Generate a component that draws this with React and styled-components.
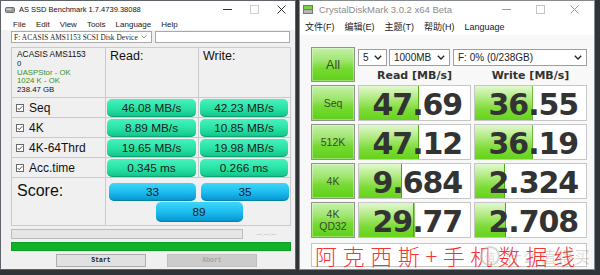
import React from 'react';
import styled, { createGlobalStyle } from 'styled-components';

const Global = createGlobalStyle`
  * { box-sizing: border-box; }
  html, body { margin: 0; padding: 0; }
  body { background: #2f3439; font-family: "Liberation Sans", Arial, sans-serif; }
`;

const Page = styled.div`
  position: relative;
  width: 600px;
  height: 275px;
  display: flex;
  align-items: flex-start;
  gap: 3px;
  background: #2f3439;
  overflow: hidden;
`;

/* ---------- shared window chrome ---------- */
const Window = styled.div`
  flex: none;
  width: 296px;
  height: 270px;
  display: flex;
  flex-direction: column;
  background: ${p => p.$bg};
  border: 1px solid ${p => p.$border};
`;

const TitleBar = styled.div`
  flex: none;
  height: 17px;
  display: flex;
  align-items: center;
  background: #fff;
  padding-left: ${p => p.$pad}px;
`;

const TitleText = styled.span`
  margin-left: ${p => p.$gap}px;
  font-family: ${p => p.$font};
  font-size: ${p => p.$size}px;
  color: ${p => p.$color};
  white-space: nowrap;
`;

const Controls = styled.div`
  margin-left: auto;
  display: flex;
  align-items: center;
  padding-right: ${p => p.$pr}px;
`;

const Ctl = styled.span`
  width: ${p => p.$w}px;
  height: 17px;
  display: flex;
  align-items: center;
  justify-content: center;
`;

const MenuBar = styled.div`
  flex: none;
  height: ${p => p.$h}px;
  display: flex;
  align-items: center;
  gap: ${p => p.$gap}px;
  padding-left: ${p => p.$pad}px;
  background: #fff;
  font-family: ${p => p.$font};
  font-size: ${p => p.$size}px;
  color: #1a1a1a;
  white-space: nowrap;
`;

const MinIcon = ({ c }) => (
  <svg width="9" height="9" viewBox="0 0 9 9"><path d="M0 4.5h9" stroke={c} strokeWidth="1" /></svg>
);
const MaxIcon = ({ c }) => (
  <svg width="9" height="9" viewBox="0 0 9 9"><rect x=".5" y=".5" width="8" height="8" fill="none" stroke={c} /></svg>
);
const CloseIcon = ({ c }) => (
  <svg width="9" height="9" viewBox="0 0 9 9"><path d="M.5 .5l8 8M8.5 .5l-8 8" stroke={c} strokeWidth="1" /></svg>
);

/* ---------- AS SSD ---------- */
const AsBody = styled.div`
  flex: 1;
  display: flex;
  flex-direction: column;
  padding: 1px 5px 0 10px;
`;

const DriveRow = styled.div`
  display: flex;
  gap: 3px;
  height: 12px;
`;

const DriveSelect = styled.div`
  width: 141px;
  display: flex;
  align-items: center;
  padding: 0 4px 0 2px;
  background: #fff;
  border: 1px solid #a9a9a9;
  font-family: "Liberation Serif", "Times New Roman", serif;
  font-size: 7.3px;
  letter-spacing: 0.1px;
  color: #222;
  white-space: nowrap;
  overflow: hidden;
`;

const Chevron = styled.span`
  margin-left: auto;
  display: flex;
  align-items: center;
`;

const DriveField = styled.div`
  flex: 1;
  background: #fff;
  border: 1px solid #a9a9a9;
`;

const Table = styled.div`
  margin-top: 4px;
  width: 280px;
  height: 179px;
  display: grid;
  grid-template-columns: 93px 92px 1fr;
  grid-template-rows: 49px 19px 19px 19px 19px 1fr;
  gap: 1px;
  padding: 1px;
  background: #cacaca;
`;

const Cell = styled.div`
  background: #f0f0f0;
  min-width: 0;
`;

const InfoCell = styled(Cell)`
  padding: 2px 0 0 5px;
  display: flex;
  flex-direction: column;
  font-size: 7.8px;
  line-height: 8.6px;
  color: #111;
`;

const InfoLine = styled.span`
  color: ${p => (p.$ok ? '#3a8f2e' : '#111')};
  font-size: ${p => (p.$big ? 8.4 : 7.8)}px;
  margin-bottom: ${p => (p.$big ? 1.5 : 0)}px;
  white-space: nowrap;
`;

const HeadCell = styled(Cell)`
  padding: 1px 0 0 4px;
  font-size: 12.5px;
  color: #111;
`;

const LabelCell = styled(Cell)`
  display: flex;
  align-items: center;
  padding-left: 2px;
  gap: 5px;
  font-size: 12px;
  color: #111;
`;

const ValueCell = styled(Cell)`
  padding: 1px 2px 0 1px;
`;

const ValueBox = styled.div`
  height: 100%;
  border-radius: 5px;
  display: flex;
  align-items: center;
  justify-content: center;
  font-size: 11.8px;
  color: #1b1b1b;
  background: ${p =>
    p.$blue
      ? 'linear-gradient(180deg, #3fd6fb 0%, #1dbdf0 50%, #0b9fd8 85%, #0a8cc4 100%)'
      : 'linear-gradient(180deg, #45f2bd 0%, #2ae4a6 50%, #19cd93 85%, #13b884 100%)'};
  box-shadow: inset 0 -1px 0 rgba(0, 90, 70, 0.25);
`;

const ScoreLabel = styled(Cell)`
  padding: 4px 0 0 5px;
  font-size: 16px;
  color: #111;
`;

const ScoreArea = styled(Cell)`
  grid-column: 2 / 4;
  display: grid;
  grid-template-columns: 87px 88px;
  grid-template-rows: 18px 20px;
  column-gap: 5px;
  row-gap: 1px;
  padding: 5px 0 0 3px;
  align-content: start;
`;

const TotalBox = styled(ValueBox)`
  grid-column: 1 / 3;
  justify-self: center;
  width: 87px;
`;

const ProgressRow = styled.div`
  margin-top: 3px;
  height: 10px;
  display: flex;
  align-items: center;
`;

const Progress = styled.div`
  width: 232px;
  height: 10px;
  background: #e6e6e6;
  border: 1px solid #bcbcbc;
`;

const Timer = styled.span`
  flex: 1;
  text-align: center;
  font-size: 6px;
  letter-spacing: 0.5px;
  color: #8a8a8a;
`;

const GreenBar = styled.div`
  margin-top: 3px;
  width: 280px;
  height: 9px;
  background: #10b228;
  border: 1px solid #0c9f21;
`;

const ButtonRow = styled.div`
  margin-top: 3px;
  display: flex;
  gap: 21px;
  padding-left: 45px;
`;

const Btn = styled.div`
  width: 90px;
  height: 13px;
  display: flex;
  align-items: center;
  justify-content: center;
  font-family: "Liberation Mono", monospace;
  font-size: 6.5px;
  font-weight: bold;
  color: ${p => (p.$disabled ? '#a5a5a5' : '#222')};
  background: ${p => (p.$disabled ? '#cccccc' : '#e1e1e1')};
  border: 1px solid ${p => (p.$disabled ? '#bfbfbf' : '#adadad')};
`;

const CheckBox = () => (
  <svg width="8" height="8" viewBox="0 0 8 8" style={{ marginLeft: 2, flex: 'none' }}>
    <rect x=".5" y=".5" width="7" height="7" fill="#fff" stroke="#6b6b6b" />
    <path d="M1.7 4.1 L3.2 5.6 L6.3 2.3" fill="none" stroke="#333" strokeWidth="0.9" />
  </svg>
);

const Chev = ({ w = 7, c = '#555', sw = 1 }) => (
  <svg width={w} height={w * 0.6} viewBox="0 0 10 6">
    <path d="M1 1l4 4 4-4" fill="none" stroke={c} strokeWidth={sw * 1.5} />
  </svg>
);

/* ---------- CrystalDiskMark ---------- */
const CdmBody = styled.div`
  flex: 1;
  display: flex;
  flex-direction: column;
  padding: 12px 7px 0 11px;
  background: #f8f8f8;
`;

const CdmGrid = styled.div`
  display: grid;
  grid-template-columns: 44px 113px 113px;
  grid-template-rows: 35px repeat(4, 36px);
  column-gap: 3px;
  row-gap: 3px;
`;

const GreenButton = styled.div`
  display: flex;
  flex-direction: column;
  align-items: center;
  justify-content: center;
  border: 1px solid #8e948a;
  background: linear-gradient(180deg, #c4f1a8 0%, #9fe56f 38%, #76da32 62%, #5fd01a 100%);
  box-shadow: inset 0 0 0 1px rgba(255, 255, 255, 0.35);
  color: #3a4a30;
  font-size: ${p => p.$size}px;
  line-height: ${p => p.$lh}px;
`;

const TopRight = styled.div`
  grid-column: 2 / 4;
  display: flex;
  flex-direction: column;
`;

const SelectRow = styled.div`
  margin-top: 2px;
  height: 17px;
  display: flex;
  gap: 2px;
`;

const SelectBox = styled.div`
  width: ${p => (p.$w ? `${p.$w}px` : 'auto')};
  flex: ${p => (p.$w ? 'none' : 1)};
  margin-left: ${p => p.$ml || 0}px;
  display: flex;
  align-items: center;
  padding: 0 4px 0 4px;
  background: #fff;
  border: 1px solid #9e9e9e;
  font-size: 10px;
  color: #222;
  white-space: nowrap;
`;

const HeaderRow = styled.div`
  display: grid;
  grid-template-columns: 113px 113px;
  column-gap: 3px;
  margin-top: 3px;
`;

const ColHead = styled.div`
  text-align: center;
  font-family: "DejaVu Sans", Verdana, sans-serif;
  font-weight: bold;
  font-size: 11px;
  color: #333;
`;

const ResultCell = styled.div`
  border: 1px solid #c6c6c6;
  background-color: #fff;
  background-image: linear-gradient(to left, #4da70f 0, #4da70f 1px, transparent 1px),
    linear-gradient(180deg, #e2f8cf 0%, #ade97c 38%, #7bdb35 70%, #66d31c 100%);
  background-repeat: no-repeat;
  text-align: right;
  padding: 3px 8px 0 0;
  font-family: "DejaVu Sans", Verdana, sans-serif;
  font-weight: bold;
  font-size: 30px;
  line-height: 31px;
  letter-spacing: -1.1px;
  color: #333;
  white-space: nowrap;
`;

const CommentBox = styled.div`
  margin-top: 5px;
  height: 24px;
  background: #fff;
  border: 1px solid #c6c6c6;
  padding-left: 3px;
  font-family: "Noto Sans CJK SC", sans-serif;
  font-weight: 300;
  font-size: 22px;
  line-height: 22px;
  letter-spacing: 5.6px;
  color: #f53434;
  white-space: nowrap;
`;

const Watermark = styled.div`
  position: absolute;
  left: 480px;
  top: 244px;
  display: flex;
  align-items: center;
  gap: 6px;
  color: rgba(130, 130, 130, 0.3);
  font-family: "Noto Sans CJK SC", sans-serif;
  pointer-events: none;
`;

const WmCircle = styled.span`
  width: 20px;
  height: 20px;
  border-radius: 50%;
  border: 2px solid rgba(150, 150, 150, 0.4);
  display: flex;
  align-items: center;
  justify-content: center;
  font-size: 10px;
  background: rgba(255, 255, 255, 0.3);
`;

const WmText = styled.span`
  font-size: 16px;
  letter-spacing: 1px;
`;

const asRows = [
  { label: 'Seq', read: '46.08 MB/s', write: '42.23 MB/s' },
  { label: '4K', read: '8.89 MB/s', write: '10.85 MB/s' },
  { label: '4K-64Thrd', read: '19.65 MB/s', write: '19.98 MB/s' },
  { label: 'Acc.time', read: '0.345 ms', write: '0.266 ms' },
];

const cdmRows = [
  { label: ['Seq'], read: '47.69', rp: 54, write: '36.55', wp: 52 },
  { label: ['512K'], read: '47.12', rp: 54, write: '36.19', wp: 52 },
  { label: ['4K'], read: '9.684', rp: 39, write: '2.324', wp: 27 },
  { label: ['4K', 'QD32'], read: '29.77', rp: 50, write: '2.708', wp: 28 },
];

const fill = pct => ({ backgroundSize: `${pct}% 100%, ${pct}% 100%` });

function AsSsd() {
  return (
    <Window $bg="#f0f0f0" $border="#5d6368">
      <TitleBar $pad={4}>
        <svg width="10" height="8" viewBox="0 0 10 8">
          <rect x="0.5" y="1.5" width="9" height="5" rx="1" fill="#9a9a9a" stroke="#6e6e6e" />
          <rect x="1.5" y="2.5" width="5" height="1.5" fill="#d6d6d6" />
        </svg>
        <TitleText $gap={4} $size={7.5} $color="#111" $font={'"Liberation Sans", sans-serif'}>
          AS SSD Benchmark 1.7.4739.38088
        </TitleText>
        <Controls $pr={0}>
          <Ctl $w={27}><MinIcon c="#333" /></Ctl>
          <Ctl $w={27}><MaxIcon c="#cfcfcf" /></Ctl>
          <Ctl $w={27}><CloseIcon c="#333" /></Ctl>
        </Controls>
      </TitleBar>
      <MenuBar $h={12} $gap={10} $pad={12} $size={8} $font={'"Liberation Sans", sans-serif'}>
        <span>File</span>
        <span>Edit</span>
        <span>View</span>
        <span>Tools</span>
        <span>Language</span>
        <span>Help</span>
      </MenuBar>
      <AsBody>
        <DriveRow>
          <DriveSelect>
            F: ACASIS AMS1153 SCSI Disk Device
            <Chevron><Chev w={6} c="#666" sw={0.8} /></Chevron>
          </DriveSelect>
          <DriveField />
        </DriveRow>
        <Table>
          <InfoCell>
            <InfoLine $big>ACASIS AMS1153</InfoLine>
            <InfoLine>0</InfoLine>
            <InfoLine $ok>UASPStor - OK</InfoLine>
            <InfoLine $ok>1024 K - OK</InfoLine>
            <InfoLine>238.47 GB</InfoLine>
          </InfoCell>
          <HeadCell>Read:</HeadCell>
          <HeadCell>Write:</HeadCell>
          {asRows.map(r => (
            <React.Fragment key={r.label}>
              <LabelCell>
                <CheckBox />
                {r.label}
              </LabelCell>
              <ValueCell><ValueBox>{r.read}</ValueBox></ValueCell>
              <ValueCell><ValueBox>{r.write}</ValueBox></ValueCell>
            </React.Fragment>
          ))}
          <ScoreLabel>Score:</ScoreLabel>
          <ScoreArea>
            <ValueBox $blue>33</ValueBox>
            <ValueBox $blue>35</ValueBox>
            <TotalBox $blue>89</TotalBox>
          </ScoreArea>
        </Table>
        <ProgressRow>
          <Progress />
          <Timer>--:--:--</Timer>
        </ProgressRow>
        <GreenBar />
        <ButtonRow>
          <Btn>Start</Btn>
          <Btn $disabled>Abort</Btn>
        </ButtonRow>
      </AsBody>
    </Window>
  );
}

function Cdm() {
  return (
    <Window $bg="#f8f8f8" $border="#868b90">
      <TitleBar $pad={3}>
        <svg width="10" height="9" viewBox="0 0 10 9">
          <rect x="0.5" y="0.5" width="9" height="4" fill="#7fcf4a" stroke="#5a8f3a" />
          <rect x="0.5" y="4.5" width="9" height="4" fill="#b5b5b5" stroke="#7a7a7a" />
        </svg>
        <TitleText $gap={6} $size={9.5} $color="#8c8c8c" $font={'"Liberation Sans", sans-serif'}>
          CrystalDiskMark 3.0.2 x64 Beta
        </TitleText>
        <Controls $pr={3}>
          <Ctl $w={34}><MinIcon c="#9a9a9a" /></Ctl>
          <Ctl $w={34}><MaxIcon c="#c4c4c4" /></Ctl>
          <Ctl $w={34}><CloseIcon c="#9a9a9a" /></Ctl>
        </Controls>
      </TitleBar>
      <MenuBar $h={17} $gap={10} $pad={5} $size={9} $font={'"Liberation Sans", "Noto Sans CJK SC", sans-serif'}>
        <span>文件(F)</span>
        <span>编辑(E)</span>
        <span>主题(T)</span>
        <span>帮助(H)</span>
        <span>Language</span>
      </MenuBar>
      <CdmBody>
        <CdmGrid>
          <GreenButton $size={12.5} $lh={14}>All</GreenButton>
          <TopRight>
            <SelectRow>
              <SelectBox $w={29}>5<Chevron><Chev w={8} c="#222" sw={1.1} /></Chevron></SelectBox>
              <SelectBox $w={61}>1000MB<Chevron><Chev w={8} c="#222" sw={1.1} /></Chevron></SelectBox>
              <SelectBox $ml={1}>F: 0% (0/238GB)<Chevron><Chev w={8} c="#222" sw={1.1} /></Chevron></SelectBox>
            </SelectRow>
            <HeaderRow>
              <ColHead>Read [MB/s]</ColHead>
              <ColHead>Write [MB/s]</ColHead>
            </HeaderRow>
          </TopRight>
          {cdmRows.map(r => (
            <React.Fragment key={r.label.join('')}>
              <GreenButton $size={10.5} $lh={12.5}>
                {r.label.map(l => <span key={l}>{l}</span>)}
              </GreenButton>
              <ResultCell style={fill(r.rp)}>{r.read}</ResultCell>
              <ResultCell style={fill(r.wp)}>{r.write}</ResultCell>
            </React.Fragment>
          ))}
        </CdmGrid>
        <CommentBox>阿克西斯+手机数据线</CommentBox>
      </CdmBody>
    </Window>
  );
}

export default function App() {
  return (
    <>
      <Global />
      <Page>
        <AsSsd />
        <Cdm />
        <Watermark>
          <WmCircle>值</WmCircle>
          <WmText>什么值得买</WmText>
        </Watermark>
      </Page>
    </>
  );
}
